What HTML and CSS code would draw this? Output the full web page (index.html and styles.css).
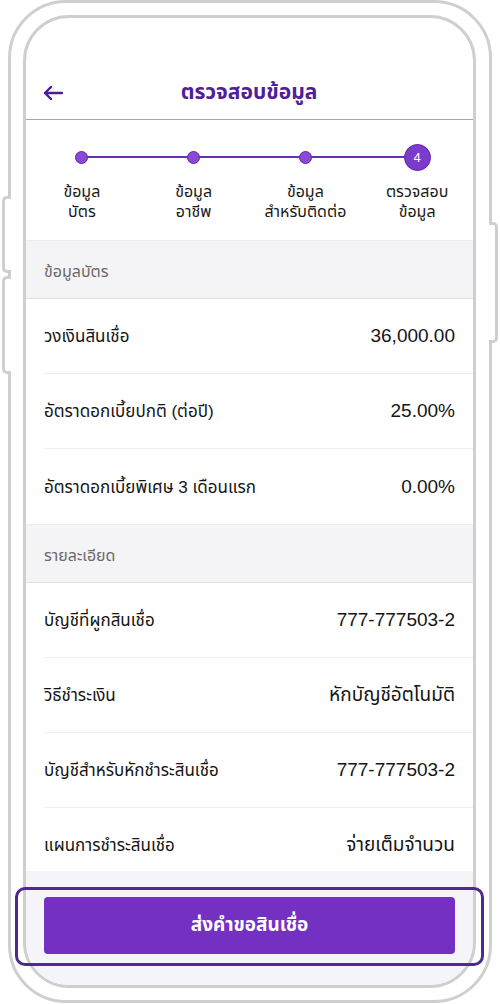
FILE: index.html
```html
<!DOCTYPE html>
<html lang="th">
<head>
<meta charset="utf-8">
<title>ตรวจสอบข้อมูล</title>
<link rel="stylesheet" href="styles.css">
</head>
<body>
<div class="phone">
  <span class="side-btn side-left-1"></span>
  <span class="side-btn side-left-2"></span>
  <span class="side-btn side-right"></span>
  <div class="frame">
    <div class="screen">
      <header class="app-header">
        <svg class="back" width="20" height="14" viewBox="0 0 20 14" aria-hidden="true">
          <path d="M19 7H2M8 1L2 7l6 6" fill="none" stroke="#4c1d95" stroke-width="2.4" stroke-linecap="round" stroke-linejoin="round"/>
        </svg>
        <h1 class="title">ตรวจสอบข้อมูล</h1>
        <span class="spacer"></span>
      </header>
      <div class="content">
        <div class="stepper">
          <div class="step done"><span class="dot-wrap"><span class="dot"></span></span><span class="label">ข้อมูล<br>บัตร</span></div>
          <div class="step done"><span class="dot-wrap"><span class="dot"></span></span><span class="label">ข้อมูล<br>อาชีพ</span></div>
          <div class="step done"><span class="dot-wrap"><span class="dot"></span></span><span class="label">ข้อมูล<br>สำหรับติดต่อ</span></div>
          <div class="step current"><span class="dot-wrap"><span class="num">4</span></span><span class="label">ตรวจสอบ<br>ข้อมูล</span></div>
        </div>
        <div class="section-title">ข้อมูลบัตร</div>
        <div class="row"><span class="key">วงเงินสินเชื่อ</span><span class="val">36,000.00</span></div>
        <div class="row"><span class="key">อัตราดอกเบี้ยปกติ (ต่อปี)</span><span class="val">25.00%</span></div>
        <div class="row"><span class="key">อัตราดอกเบี้ยพิเศษ 3 เดือนแรก</span><span class="val">0.00%</span></div>
        <div class="section-title">รายละเอียด</div>
        <div class="row"><span class="key">บัญชีที่ผูกสินเชื่อ</span><span class="val">777-777503-2</span></div>
        <div class="row"><span class="key">วิธีชำระเงิน</span><span class="val">หักบัญชีอัตโนมัติ</span></div>
        <div class="row"><span class="key">บัญชีสำหรับหักชำระสินเชื่อ</span><span class="val">777-777503-2</span></div>
        <div class="row"><span class="key">แผนการชำระสินเชื่อ</span><span class="val">จ่ายเต็มจำนวน</span></div>
      </div>
      <footer class="footer">
        <button class="submit" type="button">ส่งคำขอสินเชื่อ</button>
      </footer>
    </div>
  </div>
  <div class="highlight"></div>
</div>
</body>
</html>
```
FILE: styles.css
```css
* { box-sizing: border-box; }
html, body {
  margin: 0;
  padding: 0;
  background: #ffffff;
}
body {
  width: 500px;
  height: 1004px;
  overflow: hidden;
  font-family: "Liberation Sans", "Noto Sans Thai", "Noto Sans", sans-serif;
  color: #151515;
}
.phone {
  position: relative;
  width: 500px;
  height: 1004px;
  padding: 0 8px 1px 8px;
}
.frame {
  width: 484px;
  height: 1003px;
  border: 3px solid #cfcfcf;
  border-radius: 58px;
  padding: 12px 13px 12px 12px;
  background: #fff;
}
.screen {
  width: 100%;
  height: 100%;
  border: 3px solid #cfcfcf;
  border-radius: 46px;
  overflow: hidden;
  display: flex;
  flex-direction: column;
  background: #fff;
}
.side-btn {
  position: absolute;
  border: 3px solid #cfcfcf;
  background: #fff;
}
.side-left-1, .side-left-2 {
  left: 2px;
  width: 9px;
  border-right: none;
  border-radius: 5px 0 0 5px;
}
.side-left-1 { top: 196px; height: 77px; }
.side-left-2 { top: 276px; height: 98px; }
.side-right {
  right: 2px;
  top: 222px;
  width: 9px;
  height: 121px;
  border-left: none;
  border-radius: 0 5px 5px 0;
}
.app-header {
  flex: none;
  height: 102px;
  display: flex;
  align-items: flex-end;
  padding: 0 18px 13px 17px;
  border-bottom: 1px solid #a6a6a6;
}
.back { display: block; margin-bottom: 6px; }
.spacer { width: 20px; }
.title {
  flex: 1;
  margin: 0;
  text-align: center;
  font-size: 21px;
  line-height: 28px;
  font-weight: 700;
  color: #4f1e9a;
}
.content {
  flex: 1;
  overflow: hidden;
}
.stepper {
  display: grid;
  grid-template-columns: repeat(4, 1fr);
  padding: 24px 0 18px;
}
.step {
  position: relative;
  display: flex;
  flex-direction: column;
  align-items: center;
  gap: 12px;
}
.step:not(:last-child)::after {
  content: "";
  position: absolute;
  left: 50%;
  top: 12px;
  width: 100%;
  height: 2px;
  background: #6a2cbb;
}
.dot-wrap {
  position: relative;
  z-index: 1;
  height: 26px;
  display: flex;
  align-items: center;
  justify-content: center;
}
.dot {
  width: 13px;
  height: 13px;
  border-radius: 50%;
  background: #8a4ad8;
  border: 1px solid #5e25ab;
}
.num {
  width: 27px;
  height: 27px;
  border-radius: 50%;
  background: #7b3ccb;
  border: 1px solid #5a24a6;
  color: #fff;
  font-size: 13px;
  display: flex;
  align-items: center;
  justify-content: center;
}
.label {
  font-size: 16px;
  line-height: 20px;
  text-align: center;
  color: #1a1a1a;
}
.section-title {
  height: 59px;
  display: flex;
  align-items: center;
  padding: 4px 18px 0;
  background: #f4f3f6;
  border-top: 1px solid #ececec;
  border-bottom: 1px solid #e2e2e2;
  color: #6a6a6a;
  font-size: 16px;
}
.row {
  height: 75px;
  margin-left: 18px;
  padding-right: 18px;
  display: flex;
  align-items: center;
  justify-content: space-between;
  border-bottom: 1px solid #eeeeee;
  font-size: 17px;
}
.row:has(+ .section-title) { border-bottom: none; }
.key { padding-top: 2px; }
.val { font-size: 19px; }
.footer {
  flex: none;
  height: 114px;
  background: #f5f4f8;
  padding: 26px 18px 0;
}
.submit {
  display: block;
  width: 100%;
  height: 57px;
  border: none;
  border-radius: 4px;
  background: #7330c2;
  color: #fff;
  font-family: inherit;
  font-size: 19px;
  font-weight: 700;
}
.highlight {
  position: absolute;
  left: 15px;
  top: 887px;
  width: 469px;
  height: 79px;
  border: 3px solid #4e2894;
  border-radius: 10px;
  pointer-events: none;
}
```
